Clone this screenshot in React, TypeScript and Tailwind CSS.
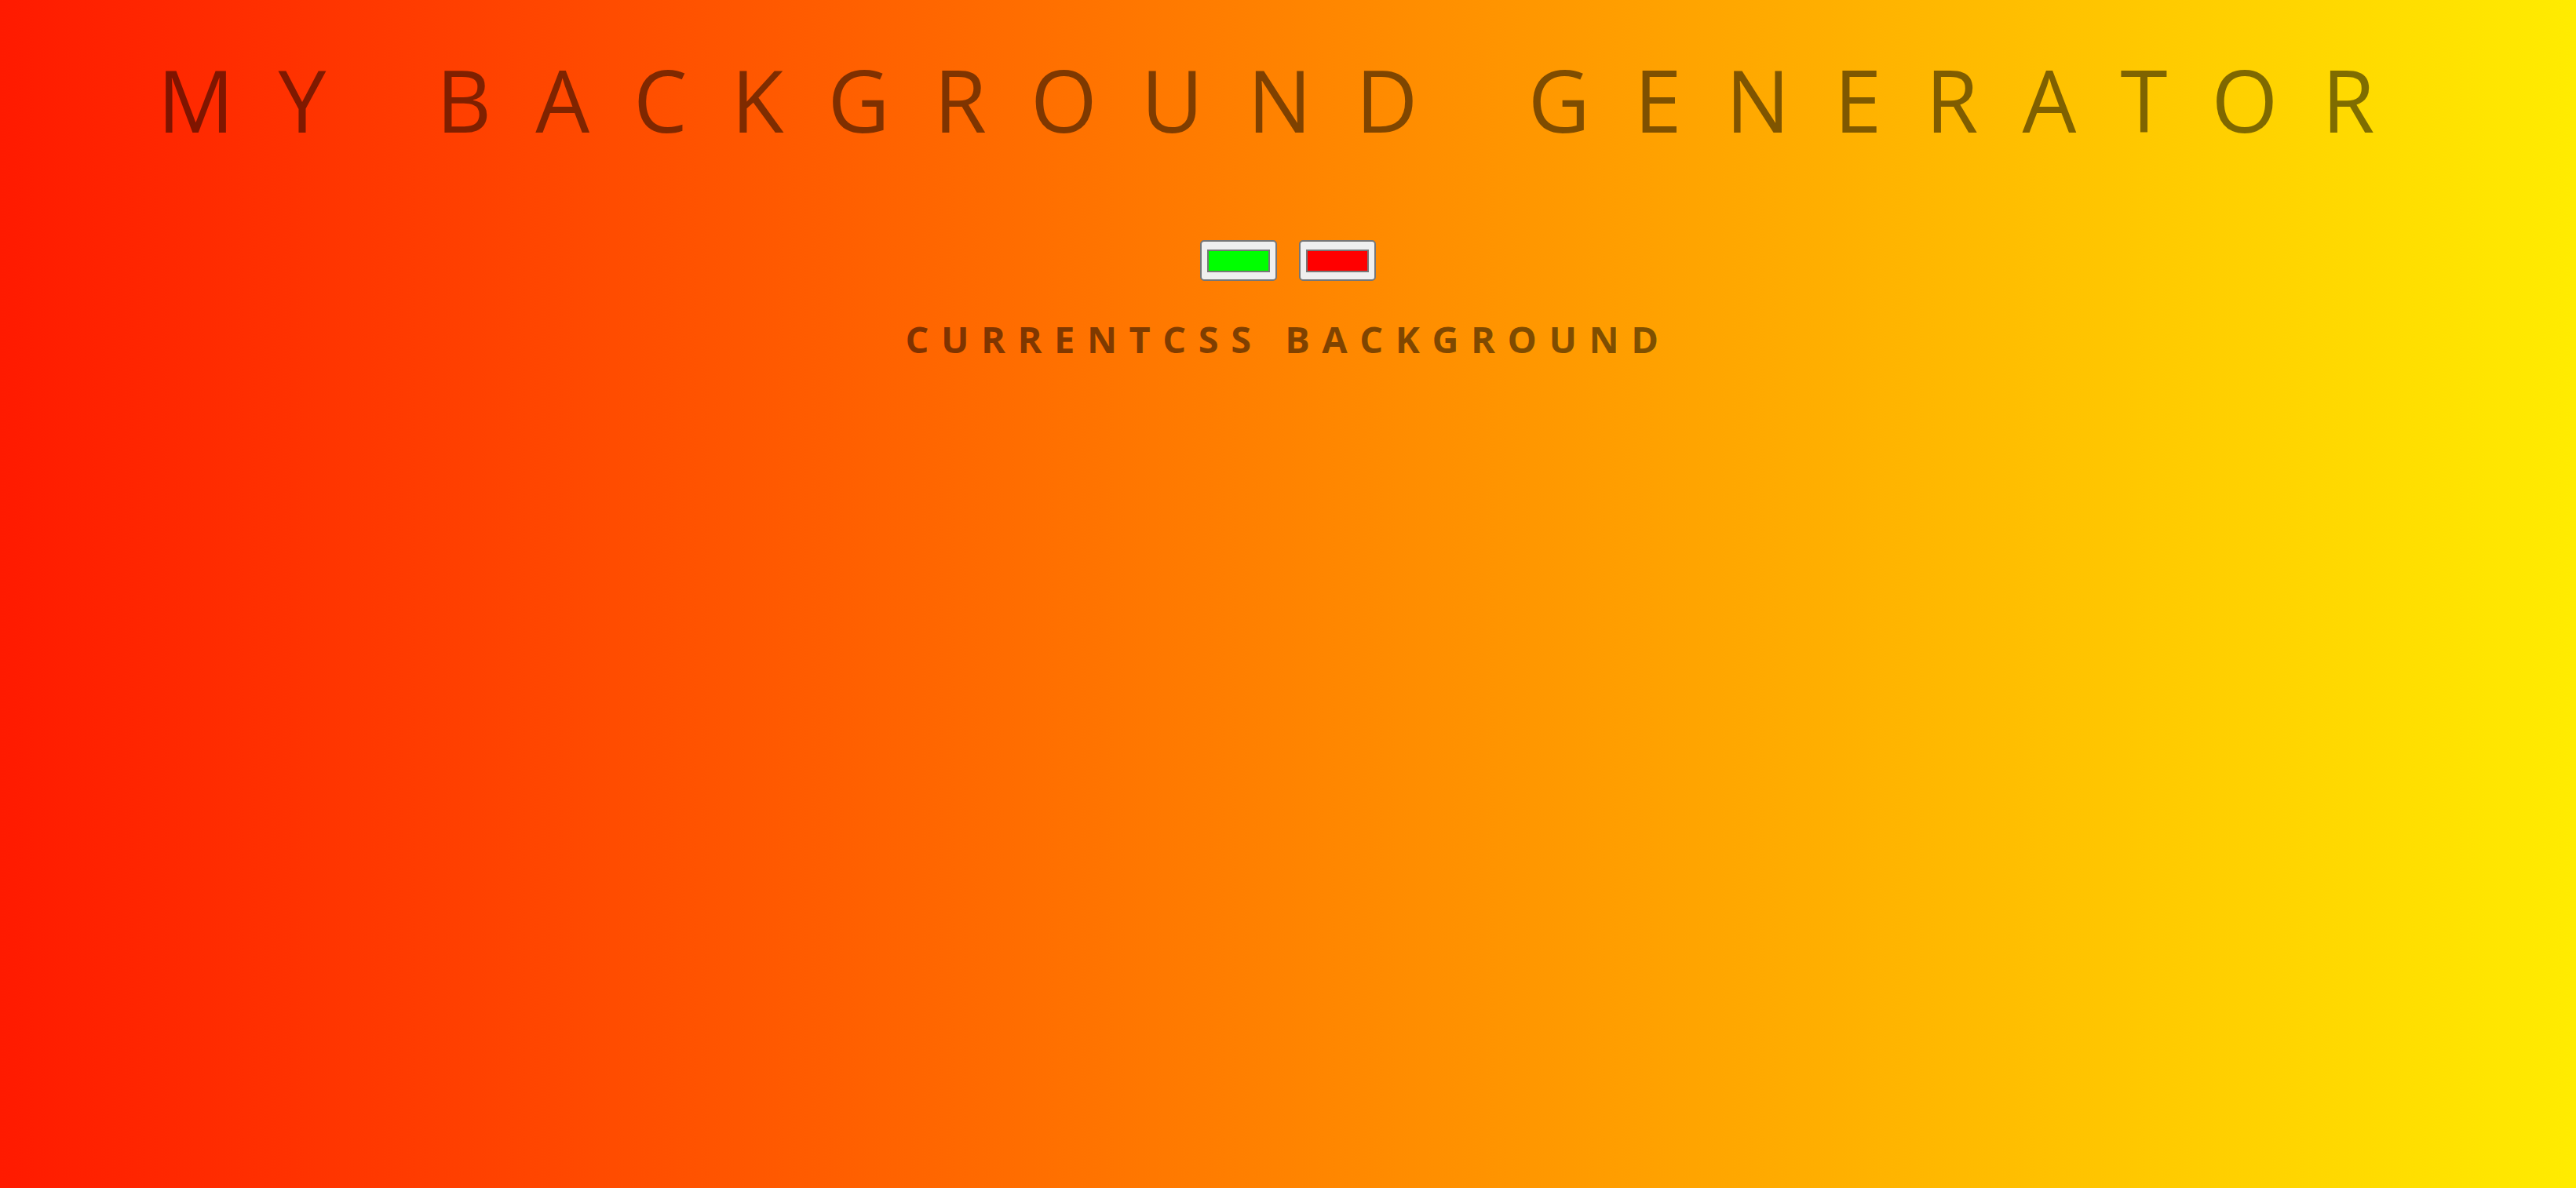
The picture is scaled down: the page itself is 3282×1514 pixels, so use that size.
import React from 'react';

const Swatch = ({ color }: { color: string }) => (
  <div className="w-[98px] h-[52px] rounded-[5px] border-2 border-[#767676] bg-[#efefef] flex items-center justify-center">
    <div className="w-[80px] h-[29px] border-2 border-[#777777]" style={{ backgroundColor: color }} />
  </div>
);

const App = () => {
  return (
    <div className="min-h-screen w-full bg-[linear-gradient(to_right,#ff1a00,#ffec00)] flex flex-col items-center text-black/50 uppercase font-['Open_Sans',sans-serif]">
      {/* Title */}
      <h1 className="pt-[72px] text-[109px] leading-none font-normal tracking-[56px] whitespace-nowrap">
        My Background Generator
      </h1>

      {/* Colour pickers */}
      <div className="mt-[125px] flex gap-[28px]">
        <Swatch color="#00ff00" />
        <Swatch color="#ff0000" />
      </div>

      {/* Current CSS */}
      <h3 className="mt-[51px] text-[47px] leading-none font-bold tracking-[15.5px] whitespace-nowrap">
        CurrentCSS Background
      </h3>
    </div>
  );
};

export default App;
